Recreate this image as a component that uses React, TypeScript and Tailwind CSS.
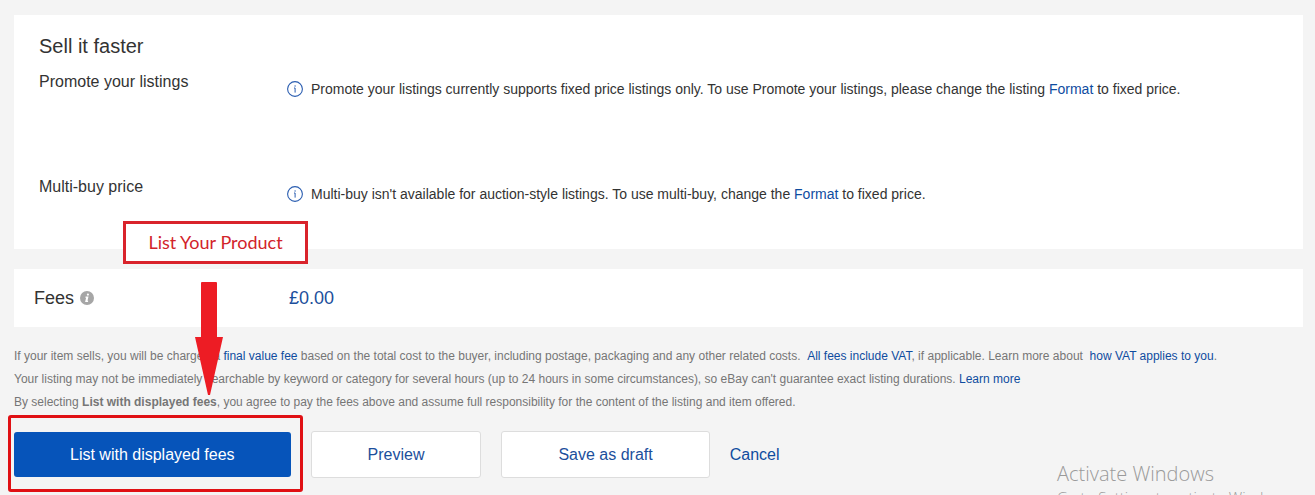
import type React from "react"

const notices = [
  {
    label: "Promote your listings",
    before: "Promote your listings currently supports fixed price listings only. To use Promote your listings, please change the listing ",
    after: " to fixed price.",
  },
  {
    label: "Multi-buy price",
    before: "Multi-buy isn't available for auction-style listings. To use multi-buy, change the ",
    after: " to fixed price.",
  },
]

function InfoOutline() {
  return (
    <svg className="h-4 w-4 shrink-0" viewBox="0 0 16 16" fill="none" aria-hidden="true">
      <circle cx="8" cy="8" r="7.4" stroke="#2a5db0" strokeWidth="1.1" />
      <rect x="7.5" y="4.4" width="1.2" height="1.2" fill="#2a5db0" />
      <path d="M7 7h1.1v4.6" stroke="#2a5db0" strokeWidth="1" />
    </svg>
  )
}

function InfoSolid() {
  return (
    <svg className="h-3.5 w-3.5" viewBox="0 0 14 14" aria-hidden="true">
      <circle cx="7" cy="7" r="7" fill="#a6a6a6" />
      <circle cx="7.9" cy="3.6" r="1.1" fill="#fff" />
      <path d="M5.6 5.6h2.9l-1 4.2h.7l-.2 1.2H5.1l1-4.2h-.8z" fill="#fff" />
    </svg>
  )
}

function TextLink({ children }: { children: React.ReactNode }) {
  return (
    <a href="#" className="text-[#0f4c9f] hover:underline">
      {children}
    </a>
  )
}

function SecondaryButton({ children }: { children: React.ReactNode }) {
  return (
    <button
      type="button"
      className="h-[47px] rounded-[3px] border border-[#dddddd] bg-white px-14 text-[#1c4f9c] hover:bg-gray-50"
    >
      {children}
    </button>
  )
}

export default function App() {
  return (
    <div className="relative min-h-screen overflow-hidden bg-[#f4f4f4] pt-[15px] pr-3 pl-3.5 font-['Liberation_Sans',Arial,sans-serif] text-[#333333]">
      <section className="bg-white px-[25px] pt-[17px] pb-6">
        <h2 className="text-xl leading-7">Sell it faster</h2>
        <div className="mt-2.5">
          {notices.map((notice) => (
            <div key={notice.label} className="flex min-h-[105px] items-start last:min-h-[50px]">
              <h3 className="w-[248px] shrink-0 text-base leading-6">{notice.label}</h3>
              <div className="flex items-center gap-2 pt-[7px]">
                <InfoOutline />
                <p className="text-sm leading-6">
                  {notice.before}
                  <TextLink>Format</TextLink>
                  {notice.after}
                </p>
              </div>
            </div>
          ))}
        </div>
      </section>

      <section className="mt-5 flex h-[58px] items-center bg-white px-5 text-lg">
        <h2 className="flex w-[255px] items-center gap-1.5">
          Fees
          <InfoSolid />
        </h2>
        <span className="text-[#1c4f9c]">£0.00</span>
      </section>

      <div className="mt-[18px] text-xs leading-[23px] text-[#767676]">
        <p>
          If your item sells, you will be charged a <TextLink>final value fee</TextLink> based on the total cost to the
          buyer, including postage, packaging and any other related costs. &nbsp;
          <TextLink>All fees include VAT</TextLink>, if applicable. Learn more about &nbsp;
          <TextLink>how VAT applies to you</TextLink>.
        </p>
        <p>
          Your listing may not be immediately searchable by keyword or category for several hours (up to 24 hours in
          some circumstances), so eBay can't guarantee exact listing durations. <TextLink>Learn more</TextLink>
        </p>
        <p>
          By selecting <b>List with displayed fees</b>, you agree to pay the fees above and assume full responsibility
          for the content of the listing and item offered.
        </p>
      </div>

      <div className="mt-[17px] flex items-center gap-5 pb-4 text-base">
        <div className="relative">
          <button type="button" className="h-[45px] rounded-[3px] bg-[#0654ba] px-14 text-white hover:bg-[#054a9f]">
            List with displayed fees
          </button>
          {/* Highlight frame */}
          <div className="pointer-events-none absolute -top-[17px] -right-3 -bottom-[15px] -left-1.5 rounded-[3px] border-3 border-[#e01014]" />
        </div>
        <SecondaryButton>Preview</SecondaryButton>
        <SecondaryButton>Save as draft</SecondaryButton>
        <TextLink>Cancel</TextLink>
      </div>

      {/* Callout and arrow */}
      <div className="absolute top-[221px] left-[123px] flex h-[43px] w-[185px] items-center justify-center border-3 border-[#d9232b] bg-white pb-0.5 font-[Lato,sans-serif] text-lg text-[#d2232a]">
        List Your Product
      </div>
      <svg className="absolute top-[282px] left-[195px] h-[113px] w-7" viewBox="0 0 28 113" aria-hidden="true">
        <path d="M7 0h14q1 0 1 1v54h6L15 113h-2L0 55h6V1q0-1 1-1z" fill="#ed1c24" />
      </svg>

      {/* Windows watermark, its second line runs off the bottom of the screen */}
      <div className="pointer-events-none absolute top-[461px] left-[1057px] font-['Open_Sans',sans-serif] font-light whitespace-nowrap text-[#9a9a9a]">
        <p className="text-xl leading-[26px]">Activate Windows</p>
        <p className="text-[15px] leading-5">Go to Settings to activate Windows.</p>
      </div>
    </div>
  )
}
